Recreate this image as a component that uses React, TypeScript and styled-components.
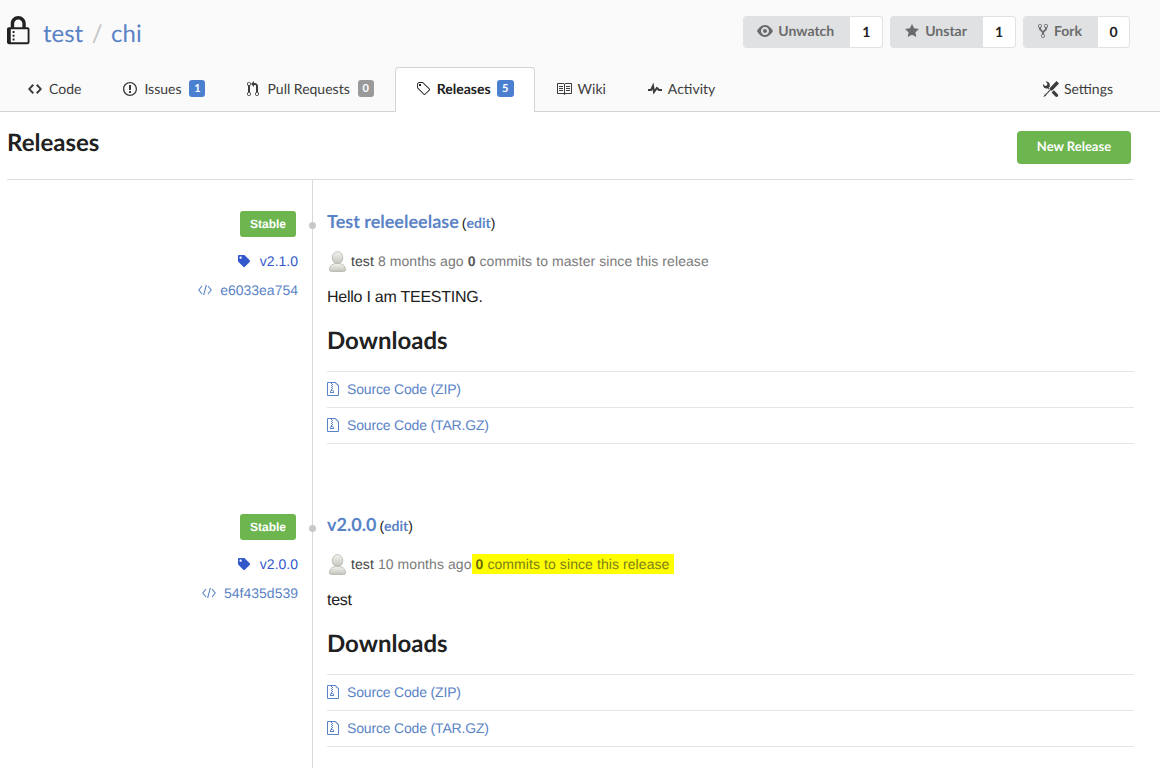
import { ReactNode } from "react";
import styled, { createGlobalStyle } from "styled-components";
import { FaTag } from "react-icons/fa";

const GlobalStyle = createGlobalStyle`
  html, body {
    margin: 0;
    padding: 0;
    background: #fff;
    color: #212121;
    font-family: "Liberation Sans", Arial, sans-serif;
    font-size: 14px;
    text-rendering: geometricPrecision;
    overflow: hidden;
  }
`;

const LATO = `Lato, "Liberation Sans", sans-serif`;
const BLUE = "#5a83c6";

const paths: { [key: string]: { w: number; d: string } } = {
  lock: { w: 12, d: "M4 13H3v-1h1v1zm8-6v7c0 .55-.45 1-1 1H1c-.55 0-1-.45-1-1V7c0-.55.45-1 1-1h1V4c0-2.2 1.8-4 4-4s4 1.8 4 4v2h1c.55 0 1 .45 1 1zM3.8 6h4.41V4c0-1.22-.98-2.2-2.2-2.2-1.22 0-2.2.98-2.2 2.2v2H3.8zM11 7H2v7h9V7zM4 8H3v1h1V8zm0 2H3v1h1v-1z" },
  code: { w: 14, d: "M9.5 3L8 4.5 11.5 8 8 11.5 9.5 13 14 8 9.5 3zm-5 0L0 8l4.5 5L6 11.5 2.5 8 6 4.5 4.5 3z" },
  issue: { w: 14, d: "M7 2.3c3.14 0 5.7 2.56 5.7 5.7s-2.56 5.7-5.7 5.7A5.71 5.71 0 0 1 1.3 8c0-3.14 2.56-5.7 5.7-5.7zM7 1C3.14 1 0 4.14 0 8s3.14 7 7 7 7-3.14 7-7-3.14-7-7-7zm1 3H6v5h2V4zm0 6H6v2h2v-2z" },
  pull: { w: 12, d: "M11 11.28V5c-.03-.78-.34-1.47-.94-2.06C9.46 2.35 8.78 2.03 8 2H7V0L4 3l3 3V4h1c.27.02.48.11.69.31.21.2.3.42.31.69v6.28A1.993 1.993 0 0 0 10 15a1.993 1.993 0 0 0 1-3.72zm-1 2.92c-.66 0-1.2-.55-1.2-1.2 0-.65.55-1.2 1.2-1.2.65 0 1.2.55 1.2 1.2 0 .65-.55 1.2-1.2 1.2zM4 3c0-1.11-.89-2-2-2a1.993 1.993 0 0 0-1 3.72v6.56A1.993 1.993 0 0 0 2 15a1.993 1.993 0 0 0 1-3.72V4.72c.59-.34 1-.98 1-1.72zm-.8 10c0 .66-.55 1.2-1.2 1.2-.65 0-1.2-.55-1.2-1.2 0-.65.55-1.2 1.2-1.2.65 0 1.2.55 1.2 1.2zM2 4.2C1.34 4.2.8 3.65.8 3c0-.65.55-1.2 1.2-1.2.65 0 1.2.55 1.2 1.2 0 .65-.55 1.2-1.2 1.2z" },
  tag: { w: 14, d: "M7.73 1.73C7.26 1.26 6.62 1 5.96 1H3.5C2.13 1 1 2.13 1 3.5v2.47c0 .66.27 1.3.73 1.77l6.06 6.06c.39.39 1.02.39 1.41 0l4.59-4.59a.996.996 0 0 0 0-1.41L7.73 1.73zM2.38 7.09c-.31-.3-.47-.7-.47-1.13V3.5c0-.88.72-1.59 1.59-1.59h2.47c.42 0 .83.16 1.13.47l6.14 6.13-4.73 4.73-6.13-6.15zM3.01 3h2v2H3V3h.01z" },
  book: { w: 16, d: "M3 5h4v1H3V5zm0 3h4V7H3v1zm0 2h4V9H3v1zm11-5h-4v1h4V5zm0 2h-4v1h4V7zm0 2h-4v1h4V9zm2-6v9c0 .55-.45 1-1 1H9.5l-1 1-1-1H2c-.55 0-1-.45-1-1V3c0-.55.45-1 1-1h5.5l1 1 1-1H15c.55 0 1 .45 1 1zm-8 .5L7.5 3H2v9h6V3.5zm7-.5H9.5l-.5.5V12h6V3z" },
  pulse: { w: 14, d: "M11.5 8L8.8 5.4 6.6 8.5 5.5 1.6 2.38 8H0v2h3.6l.9-1.8.9 5.4L9 8.5l1.6 1.5H14V8h-2.5z" },
  tools: { w: 16, d: "M4.48 7.27c.26.26 1.28 1.33 1.28 1.33l.56-.58-.88-.91 1.69-1.8s-.76-.74-.43-.45c.32-1.19.03-2.51-.87-3.44C4.93.5 3.66.2 2.52.51l1.93 2-.51 1.96-1.89.52-1.93-2C-.19 4.17.1 5.48 1 6.4c.94.98 2.29 1.26 3.48.87zm6.44 1.94l-2.33 2.3 3.84 3.98c.31.33.73.49 1.14.49.41 0 .82-.16 1.14-.49.63-.65.63-1.7 0-2.35l-3.79-3.93zM16 2.53L13.55 0 6.33 7.46l.88.91-4.31 4.46-.99.53-1.39 2.27.35.37 2.2-1.44.51-1.02L7.9 9.08l.88.91L16 2.53z" },
  eye: { w: 16, d: "M8.06 2C3 2 0 8 0 8s3 6 8.06 6C13 14 16 8 16 8s-3-6-7.94-6zM8 12c-2.2 0-4-1.78-4-4 0-2.2 1.8-4 4-4 2.22 0 4 1.8 4 4 0 2.22-1.78 4-4 4zm2-4c0 1.11-.89 2-2 2-1.11 0-2-.89-2-2 0-1.11.89-2 2-2 1.11 0 2 .89 2 2z" },
  star: { w: 14, d: "M14 6l-4.9-.64L7 1 4.9 5.36 0 6l3.6 3.26L2.67 14 7 11.67 11.33 14l-.93-4.74L14 6z" },
  fork: { w: 10, d: "M8 1a1.993 1.993 0 0 0-1 3.72V6L5 8 3 6V4.72A1.993 1.993 0 0 0 2 1a1.993 1.993 0 0 0-1 3.72V6.5l3 3v1.78A1.993 1.993 0 0 0 5 15a1.993 1.993 0 0 0 1-3.72V9.5l3-3V4.72A1.993 1.993 0 0 0 8 1zM2 4.2C1.34 4.2.8 3.65.8 3c0-.65.55-1.2 1.2-1.2.65 0 1.2.55 1.2 1.2 0 .65-.55 1.2-1.2 1.2zm3 10c-.66 0-1.2-.55-1.2-1.2 0-.65.55-1.2 1.2-1.2.65 0 1.2.55 1.2 1.2 0 .65-.55 1.2-1.2 1.2zm3-10c-.66 0-1.2-.55-1.2-1.2 0-.65.55-1.2 1.2-1.2.65 0 1.2.55 1.2 1.2 0 .65-.55 1.2-1.2 1.2z" },
  zip: { w: 12, d: "M8.5 1H1a1 1 0 0 0-1 1v12a1 1 0 0 0 1 1h10a1 1 0 0 0 1-1V4.5L8.5 1zM11 14H1V2h3v1h1V2h3l3 3v9zM5 4V3h1v1H5zM4 4h1v1H4V4zm1 2V5h1v1H5zM4 6h1v1H4V6zm1 2V7h1v1H5zM4 9.28A2 2 0 0 0 3 11v1h4v-1a2 2 0 0 0-2-2V8H4v1.28zM6 10v1H4v-1h2z" },
};

const Svg = styled.svg`
  display: block;
  flex: none;
  fill: currentColor;
`;

const Octicon = ({ name, size = 16 }: { name: string; size?: number }) => (
  <Svg
    width={(paths[name].w * size) / 16}
    height={size}
    viewBox={`0 0 ${paths[name].w} 16`}
  >
    <path d={paths[name].d} />
  </Svg>
);

const Header = styled.div`
  background: #fafafa;
  border-bottom: 1px solid #d4d4d5;
  height: 111px;
  box-sizing: content-box;
  display: flex;
  flex-direction: column;
  font-family: ${LATO};
`;

const TopRow = styled.div`
  display: flex;
  flex: none;
  justify-content: space-between;
  align-items: flex-start;
  height: 67px;
  padding: 16px 30px 0 7px;
  box-sizing: border-box;
`;

const RepoTitle = styled.div`
  display: flex;
  align-items: center;
  height: 30px;
  padding-top: 2px;
  font-size: 24px;
  color: ${BLUE};
  svg {
    color: #212121;
    margin-right: 13.5px;
    margin-top: -4px;
  }
`;

const Slash = styled.span`
  color: #c4c4c4;
  margin: 0 8.5px;
`;

const ActionRow = styled.div`
  display: flex;
  gap: 7px;
`;

const ActionGroup = styled.div`
  display: flex;
  height: 32px;
  font-size: 14px;
  font-weight: 700;
`;

const ActionLabel = styled.div`
  display: flex;
  align-items: center;
  gap: 5px;
  padding: 0 16px 3px 14px;
  background: #e0e1e2;
  color: #6a6b6c;
  border-radius: 4px 0 0 4px;
`;

const ActionIcon = styled.div<{ $wide?: boolean }>`
  padding: 0 ${(p) => (p.$wide ? "1px" : "0")};
`;

const ActionCount = styled.div<{ $width: number }>`
  display: flex;
  align-items: center;
  justify-content: center;
  width: ${(p) => p.$width}px;
  box-sizing: border-box;
  padding-bottom: 2px;
  background: #fff;
  color: #212121;
  border: 1px solid #e0e1e2;
  border-left: none;
  border-radius: 0 4px 4px 0;
`;

const TabRow = styled.div`
  display: flex;
  flex: none;
  align-items: stretch;
  height: 45px;
  padding: 0 26px 0 7px;
  font-size: 14px;
  color: #3c3c3c;
`;

const Tab = styled.div<{ $active?: boolean; $right?: boolean; $gap?: number }>`
  display: flex;
  align-items: center;
  gap: ${(p) => p.$gap ?? 7}px;
  padding: 0 20px 3px;
  border: 1px solid ${(p) => (p.$active ? "#d4d4d5" : "transparent")};
  border-bottom: none;
  border-radius: 4px 4px 0 0;
  margin-left: ${(p) => (p.$right ? "auto" : "0")};
  background: ${(p) => (p.$active ? "#fff" : "transparent")};
  color: ${(p) => (p.$active ? "#212121" : "#3c3c3c")};
  font-weight: ${(p) => (p.$active ? 700 : 400)};
  height: 45px;
  box-sizing: border-box;
  position: relative;
  z-index: 1;
  span {
    line-height: 1;
  }
`;

const Count = styled.div<{ $grey?: boolean; $width?: number; $shift?: number }>`
  display: flex;
  align-items: center;
  justify-content: center;
  width: ${(p) => p.$width ?? 16}px;
  height: 17px;
  margin-left: ${(p) => p.$shift ?? 0}px;
  border-radius: 3px;
  font-size: 11px;
  font-weight: 700;
  color: #fff;
  background: ${(p) => (p.$grey ? "#9a9a9a" : "#4b80d0")};
`;

const Content = styled.div`
  padding: 0 26px 0 7px;
`;

const PageHead = styled.div`
  display: flex;
  justify-content: space-between;
  align-items: flex-start;
  height: 68px;
  box-sizing: border-box;
  border-bottom: 1px solid #dcddde;
  padding: 19px 3px 0 0;
`;

const PageTitle = styled.h2`
  margin: 0;
  font-family: ${LATO};
  font-size: 24px;
  line-height: 24px;
  font-weight: 700;
  color: #212121;
`;

const NewButton = styled.div`
  width: 114px;
  height: 33px;
  padding-bottom: 3px;
  box-sizing: border-box;
  display: flex;
  align-items: center;
  justify-content: center;
  background: #6cb54f;
  border-radius: 4px;
  color: #fff;
  font-family: ${LATO};
  font-size: 13px;
  font-weight: 700;
`;

const Release = styled.div`
  display: grid;
  grid-template-columns: 305px 1fr;
  height: 303px;
`;

const Side = styled.div`
  display: flex;
  flex-direction: column;
  align-items: flex-end;
  padding: 31px 14px 0 0;
`;

const Stable = styled.div`
  width: 56px;
  height: 26px;
  margin-right: 2px;
  display: flex;
  align-items: center;
  justify-content: center;
  background: #6cb54f;
  border-radius: 3px;
  color: #fff;
  font-size: 12px;
  font-weight: 700;
`;

const SideLink = styled.div<{ $strong?: boolean; $offset: number }>`
  display: flex;
  align-items: center;
  gap: ${(p) => (p.$strong ? 10 : 8)}px;
  height: 16px;
  margin-top: ${(p) => p.$offset}px;
  font-size: 14px;
  color: ${(p) => (p.$strong ? "#3358cc" : BLUE)};
`;

const CodeGlyph = styled.svg`
  display: block;
  fill: none;
  stroke: currentColor;
  stroke-width: 1.1;
`;

const Main = styled.div`
  position: relative;
  border-left: 1px solid #d8d9da;
  padding: 0 0 0 14px;
`;

const Dot = styled.div`
  position: absolute;
  left: -4px;
  top: 42px;
  width: 7px;
  height: 7px;
  border-radius: 50%;
  background: #c8c9ca;
`;

const TitleRow = styled.div`
  display: flex;
  align-items: baseline;
  gap: 3px;
  height: 24px;
  margin-top: 29px;
  font-size: 14px;
  line-height: 24px;
`;

const ReleaseTitle = styled.span`
  font-family: ${LATO};
  font-size: 18px;
  font-weight: 700;
  color: ${BLUE};
`;

const EditNote = styled.span`
  font-size: 14px;
  b {
    font-family: ${LATO};
    color: ${BLUE};
    font-weight: 700;
  }
`;

const Meta = styled.div`
  display: flex;
  align-items: center;
  height: 24px;
  margin-top: 16px;
  color: #7a7a7a;
  font-size: 14px;
  letter-spacing: 0.08px;
  white-space: pre;
  b {
    color: #5a5a5a;
  }
`;

const Author = styled.span`
  color: #444;
  margin: 0 4px 0 4px;
`;

const Highlight = styled.span<{ $on?: boolean }>`
  background: ${(p) => (p.$on ? "#ffff00" : "transparent")};
  color: ${(p) => (p.$on ? "#7d7d1a" : "inherit")};
  padding: ${(p) => (p.$on ? "2px 5px 2px 4px" : "0")};
  b {
    color: ${(p) => (p.$on ? "#6a6a00" : "#5a5a5a")};
  }
`;

const Note = styled.div`
  font-size: 16px;
  letter-spacing: -0.25px;
  line-height: 20px;
  margin-top: 15px;
  color: #212121;
`;

const DownloadsTitle = styled.h3`
  margin: 18px 0 0;
  font-family: ${LATO};
  font-size: 24px;
  line-height: 30px;
  font-weight: 700;
  color: #212121;
`;

const DownloadList = styled.div`
  margin-top: 15px;
  border-top: 1px solid #e4e5e6;
`;

const DownloadRow = styled.div`
  display: flex;
  align-items: center;
  gap: 8px;
  height: 33px;
  padding-bottom: 2px;
  border-bottom: 1px solid #e4e5e6;
  color: ${BLUE};
  font-size: 14px;
  letter-spacing: -0.17px;
`;

const AvatarSvg = styled.svg`
  display: block;
  flex: none;
  margin-left: 1px;
`;

const Avatar = () => (
  <AvatarSvg width="19" height="23" viewBox="0 0 20 24">
    <defs>
      <linearGradient id="avatar-fill" x1="0" y1="0" x2="0" y2="1">
        <stop offset="0" stopColor="#f4f4f0" />
        <stop offset="1" stopColor="#c4c4bc" />
      </linearGradient>
    </defs>
    <ellipse cx="10" cy="8" rx="5.6" ry="6.4" fill="url(#avatar-fill)" stroke="#aaaaa2" strokeWidth="0.7" />
    <path d="M1.5 21c0-5 3.6-7 8.5-7s8.5 2 8.5 7c0 1-1 1.5-2 1.5H3.5c-1 0-2-.5-2-1.5z" fill="url(#avatar-fill)" stroke="#aaaaa2" strokeWidth="0.7" />
  </AvatarSvg>
);

const ActionButton = ({
  icon,
  label,
  count,
  width,
  wide,
}: {
  icon: ReactNode;
  label: string;
  count: string;
  width: number;
  wide?: boolean;
}) => (
  <ActionGroup>
    <ActionLabel>
      <ActionIcon $wide={wide}>{icon}</ActionIcon>
      {label}
    </ActionLabel>
    <ActionCount $width={width}>{count}</ActionCount>
  </ActionGroup>
);

const releases = [
  {
    title: "Test releeleelase",
    version: "v2.1.0",
    commit: "e6033ea754",
    age: "8 months ago",
    suffix: "commits to master since this release",
    note: "Hello I am TEESTING.",
    highlight: false,
  },
  {
    title: "v2.0.0",
    version: "v2.0.0",
    commit: "54f435d539",
    age: "10 months ago",
    suffix: "commits to since this release",
    note: "test",
    highlight: true,
  },
];

const App = () => (
  <>
    <GlobalStyle />
    <Header>
      <TopRow>
        <RepoTitle>
          <Octicon name="lock" size={30} />
          <span>test</span>
          <Slash>/</Slash>
          <span>chi</span>
        </RepoTitle>
        <ActionRow>
          <ActionButton icon={<Octicon name="eye" />} label="Unwatch" count="1" width={33} />
          <ActionButton icon={<Octicon name="star" />} label="Unstar" count="1" width={33} wide />
          <ActionButton icon={<Octicon name="fork" />} label="Fork" count="0" width={32} wide />
        </ActionRow>
      </TopRow>
      <TabRow>
        <Tab>
          <Octicon name="code" />
          <span>Code</span>
        </Tab>
        <Tab>
          <Octicon name="issue" />
          <span>Issues</span>
          <Count $shift={1}>1</Count>
        </Tab>
        <Tab $gap={8}>
          <Octicon name="pull" />
          <span>Pull Requests</span>
          <Count $grey>0</Count>
        </Tab>
        <Tab $active>
          <Octicon name="tag" />
          <span>Releases</span>
          <Count $width={17} $shift={-1}>5</Count>
        </Tab>
        <Tab $gap={6}>
          <Octicon name="book" />
          <span>Wiki</span>
        </Tab>
        <Tab $gap={6}>
          <Octicon name="pulse" />
          <span>Activity</span>
        </Tab>
        <Tab $right $gap={5}>
          <Octicon name="tools" />
          <span>Settings</span>
        </Tab>
      </TabRow>
    </Header>
    <Content>
      <PageHead>
        <PageTitle>Releases</PageTitle>
        <NewButton>New Release</NewButton>
      </PageHead>
      {releases.map((release) => (
        <Release key={release.commit}>
          <Side>
            <Stable>Stable</Stable>
            <SideLink $strong $offset={16}>
              <FaTag size={12} />
              {release.version}
            </SideLink>
            <SideLink $offset={13}>
              <CodeGlyph width="14" height="12" viewBox="0 0 14 12">
                <path d="M4 2L.8 6 4 10M10 2L13.2 6 10 10M8.4 .8L5.6 11.2" />
              </CodeGlyph>
              {release.commit}
            </SideLink>
          </Side>
          <Main>
            <Dot />
            <TitleRow>
              <ReleaseTitle>{release.title}</ReleaseTitle>
              <EditNote>
                (<b>edit</b>)
              </EditNote>
            </TitleRow>
            <Meta>
              <Avatar />
              <Author>test</Author>
              {release.age}
              {release.highlight ? "" : " "}
              <Highlight $on={release.highlight}>
                <b>0</b> {release.suffix}
              </Highlight>
            </Meta>
            <Note>{release.note}</Note>
            <DownloadsTitle>Downloads</DownloadsTitle>
            <DownloadList>
              <DownloadRow>
                <Octicon name="zip" />
                Source Code (ZIP)
              </DownloadRow>
              <DownloadRow>
                <Octicon name="zip" />
                Source Code (TAR.GZ)
              </DownloadRow>
            </DownloadList>
          </Main>
        </Release>
      ))}
    </Content>
  </>
);

export default App;
